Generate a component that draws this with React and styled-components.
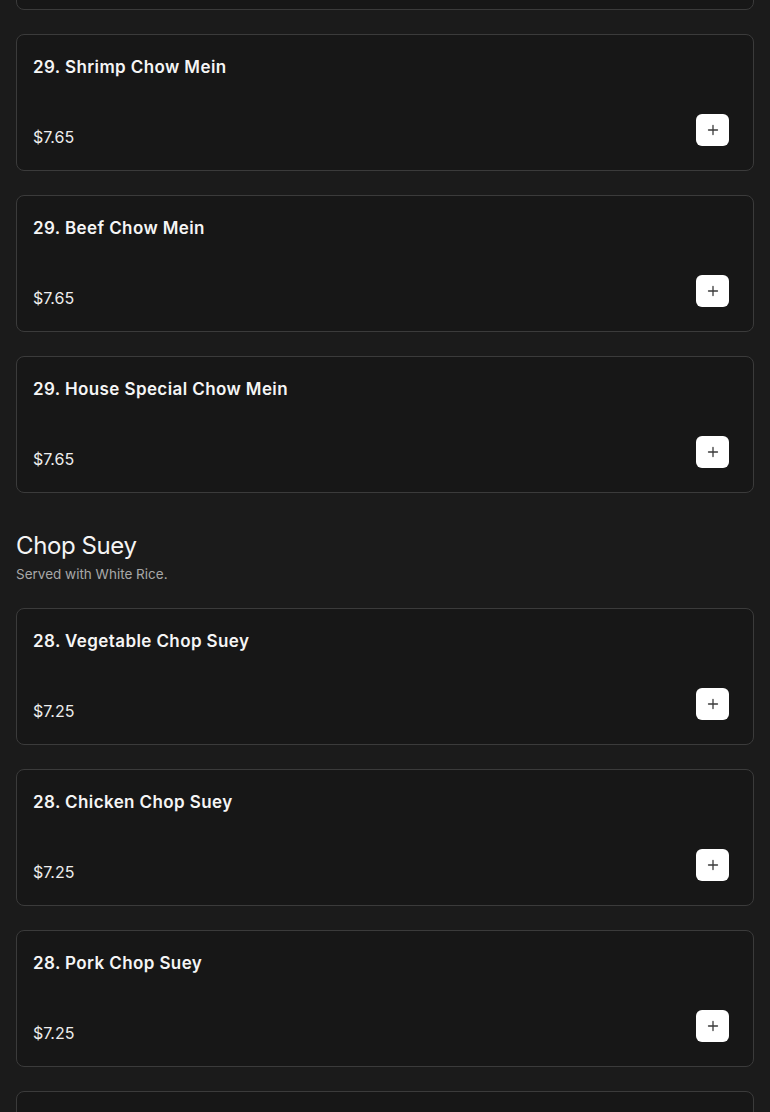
import React from 'react';
import styled, { createGlobalStyle } from 'styled-components';

const sections = [
  {
    name: null,
    items: [
      { title: '29. Chicken Chow Mein', price: '$7.65' },
      { title: '29. Shrimp Chow Mein', price: '$7.65' },
      { title: '29. Beef Chow Mein', price: '$7.65' },
      { title: '29. House Special Chow Mein', price: '$7.65' },
    ],
  },
  {
    name: 'Chop Suey',
    note: 'Served with White Rice.',
    items: [
      { title: '28. Vegetable Chop Suey', price: '$7.25' },
      { title: '28. Chicken Chop Suey', price: '$7.25' },
      { title: '28. Pork Chop Suey', price: '$7.25' },
      { title: '28. Beef Chop Suey', price: '$7.25' },
    ],
  },
];

function PlusIcon() {
  return (
    <svg width="12" height="12" viewBox="0 0 12 12" fill="none">
      <path d="M6 1.5v9M1.5 6h9" stroke="#3a3a3a" strokeWidth="1.3" strokeLinecap="round" />
    </svg>
  );
}

function App() {
  return (
    <>
      <GlobalStyle />
      <Page>
        {sections.map((section, i) => (
          <Section key={i} $first={i === 0}>
            {section.name && (
              <SectionHead>
                <SectionTitle>{section.name}</SectionTitle>
                <SectionNote>{section.note}</SectionNote>
              </SectionHead>
            )}
            <List>
              {section.items.map((item) => (
                <Card key={item.title}>
                  <ItemTitle>{item.title}</ItemTitle>
                  <Bottom>
                    <Price>{item.price}</Price>
                    <AddButton aria-label="Add">
                      <PlusIcon />
                    </AddButton>
                  </Bottom>
                </Card>
              ))}
            </List>
          </Section>
        ))}
      </Page>
    </>
  );
}

export default App;

const GlobalStyle = createGlobalStyle`
  html, body {
    margin: 0;
    background: #1b1b1b;
  }
  body {
    font-family: 'Inter', 'Noto Sans', sans-serif;
    color: #f2f2f2;
  }
`;

const Page = styled.div`
  padding: 0 16px;
  overflow: hidden;
  height: 1112px;
`;

const Section = styled.section`
  margin-top: ${(p) => (p.$first ? '-127px' : '40px')};
`;

const SectionHead = styled.div`
  margin-bottom: 24px;
`;

const SectionTitle = styled.h2`
  margin: 0;
  font-size: 24px;
  line-height: 26px;
  font-weight: 400;
  letter-spacing: -0.4px;
  color: #f4f4f4;
`;

const SectionNote = styled.p`
  margin: 5px 0 0;
  font-size: 13.5px;
  line-height: 20px;
  color: #a8a8a8;
`;

const List = styled.div`
  display: flex;
  flex-direction: column;
  gap: 24px;
`;

const Card = styled.div`
  box-sizing: border-box;
  height: 137px;
  display: flex;
  flex-direction: column;
  justify-content: space-between;
  padding: 18px 24px 23px 16px;
  background: #171717;
  border: 1px solid #3b3b3b;
  border-radius: 8px;
`;

const ItemTitle = styled.div`
  font-size: 17px;
  line-height: 28px;
  font-weight: 600;
  letter-spacing: 0.4px;
  color: #f5f5f5;
`;

const Bottom = styled.div`
  display: flex;
  align-items: flex-end;
  justify-content: space-between;
`;

const Price = styled.span`
  font-size: 16px;
  line-height: 20px;
  color: #ededed;
`;

const AddButton = styled.button`
  width: 33px;
  height: 32px;
  margin-bottom: 1px;
  display: flex;
  align-items: center;
  justify-content: center;
  padding: 0;
  border: none;
  border-radius: 6px;
  background: #ffffff;
  cursor: pointer;
`;
